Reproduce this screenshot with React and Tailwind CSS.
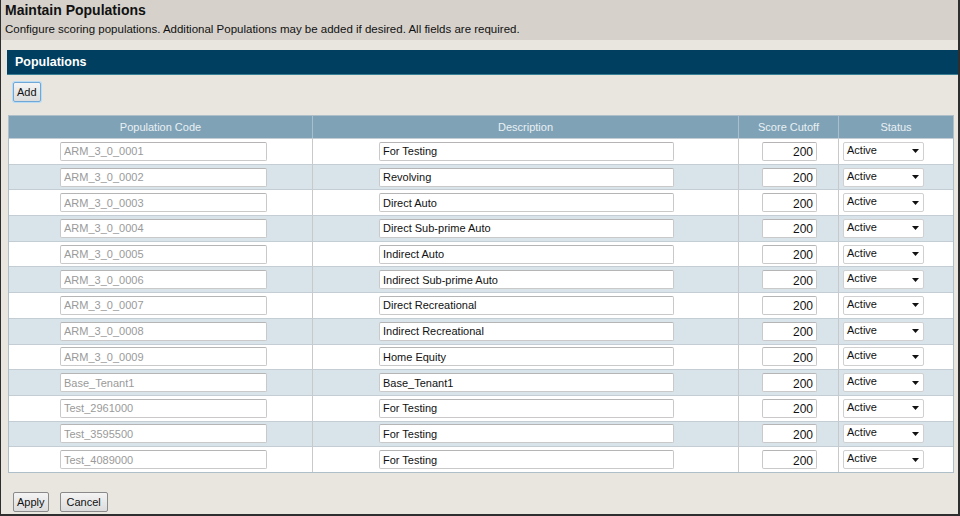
import React from 'react';

const rows = [
    ['ARM_3_0_0001', 'For Testing'],
    ['ARM_3_0_0002', 'Revolving'],
    ['ARM_3_0_0003', 'Direct Auto'],
    ['ARM_3_0_0004', 'Direct Sub-prime Auto'],
    ['ARM_3_0_0005', 'Indirect Auto'],
    ['ARM_3_0_0006', 'Indirect Sub-prime Auto'],
    ['ARM_3_0_0007', 'Direct Recreational'],
    ['ARM_3_0_0008', 'Indirect Recreational'],
    ['ARM_3_0_0009', 'Home Equity'],
    ['Base_Tenant1', 'Base_Tenant1'],
    ['Test_2961000', 'For Testing'],
    ['Test_3595500', 'For Testing'],
    ['Test_4089000', 'For Testing'],
];

const inputCls = 'h-[19px] bg-white border border-[#c9c9c9] border-t-[#b5b5b5] rounded-[2px] px-[3px] text-[11px] leading-[17px] outline-none';

// dropdown drawn as a box so the text sits where the reference has it
const StatusSelect = () => (
    <div className="w-[81px] h-[19px] bg-white border border-[#d0d0d0] rounded-[2px] flex items-center justify-between pl-[3px] pr-[4px]">
        <span className="text-[11px] leading-[13px] text-[#111] -mt-[2px]">Active</span>
        <svg width="7" height="4" viewBox="0 0 7 4">
            <path d="M0 0 H7 L3.5 4 Z" fill="#111" />
        </svg>
    </div>
);

const Button = ({ children, focused, className = '' }) => (
    <button
        className={`h-[20px] rounded-[2px] text-[11px] text-[#111] bg-gradient-to-b from-[#f4f4f4] to-[#dcdcdc] border ${focused ? 'border-[#6fa8d6] shadow-[0_0_0_1px_#b9dcf5]' : 'border-[#8a8a8a]'} ${className}`}
    >
        {children}
    </button>
);

export default function App() {
    return (
        <div
            className="w-[960px] h-[516px] bg-[#e9e5df] border-l border-r-2 border-b-2 border-[#2e2e2e] flex flex-col overflow-hidden text-[#111]"
            style={{ fontFamily: '"Liberation Sans", Arial, sans-serif' }}
        >
            {/* Page heading */}
            <div className="h-[40px] bg-[#d6d2cb] pl-[4px] shrink-0">
                <div className="text-[14px] font-bold leading-[20px]">Maintain Populations</div>
                <div className="text-[11.5px] leading-[16px] mt-[1px]">
                    Configure scoring populations. Additional Populations may be added if desired. All fields are required.
                </div>
            </div>

            {/* Section bar */}
            <div className="mt-[10px] ml-[6px] h-[25px] bg-[#003f60] border-b border-[#3b7f95] flex items-center pl-[8px] shrink-0">
                <span className="text-white text-[12.5px] font-bold">Populations</span>
            </div>

            <div className="pl-[12px] mt-[4px] shrink-0">
                <Button focused className="px-[3px]">Add</Button>
            </div>

            {/* Table */}
            <div className="ml-[7px] mt-[12px] w-[946px] border border-[#aebfca] bg-white shrink-0">
                <div className="grid grid-cols-[304px_426px_100px_114px] h-[22px] bg-[#7fa2b6] text-[11px] text-[#e9f0f4]">
                    <div className="flex items-center justify-center border-r border-[#a9bfcc]">Population Code</div>
                    <div className="flex items-center justify-center border-r border-[#a9bfcc]">Description</div>
                    <div className="flex items-center justify-center border-r border-[#a9bfcc]">Score Cutoff</div>
                    <div className="flex items-center justify-center">Status</div>
                </div>
                {rows.map(([code, desc], i) => (
                    <div
                        key={code}
                        className={`grid grid-cols-[304px_426px_100px_114px] h-[25.7px] border-t border-[#c4cdd3] ${i % 2 === 1 ? 'bg-[#d8e3ea]' : 'bg-white'}`}
                    >
                        <div className="flex items-center pl-[51px] border-r border-[#c9c9c9]">
                            <input readOnly value={code} className={`${inputCls} w-[207px] text-[#9a9a9a]`} />
                        </div>
                        <div className="flex items-center pl-[66px] border-r border-[#c9c9c9]">
                            <input readOnly value={desc} className={`${inputCls} w-[295px] text-[#111]`} />
                        </div>
                        <div className="flex items-center pl-[23px] border-r border-[#c9c9c9]">
                            <input readOnly value="200" className={`${inputCls} w-[55px] text-right text-[12px] text-[#111] pt-[2px]`} />
                        </div>
                        <div className="flex items-center pl-[4px]">
                            <StatusSelect />
                        </div>
                    </div>
                ))}
            </div>

            {/* Footer actions */}
            <div className="flex items-center gap-[11px] pl-[12px] mt-[19px] shrink-0">
                <Button className="px-[3px]">Apply</Button>
                <Button className="px-[6px]">Cancel</Button>
            </div>
        </div>
    );
}
